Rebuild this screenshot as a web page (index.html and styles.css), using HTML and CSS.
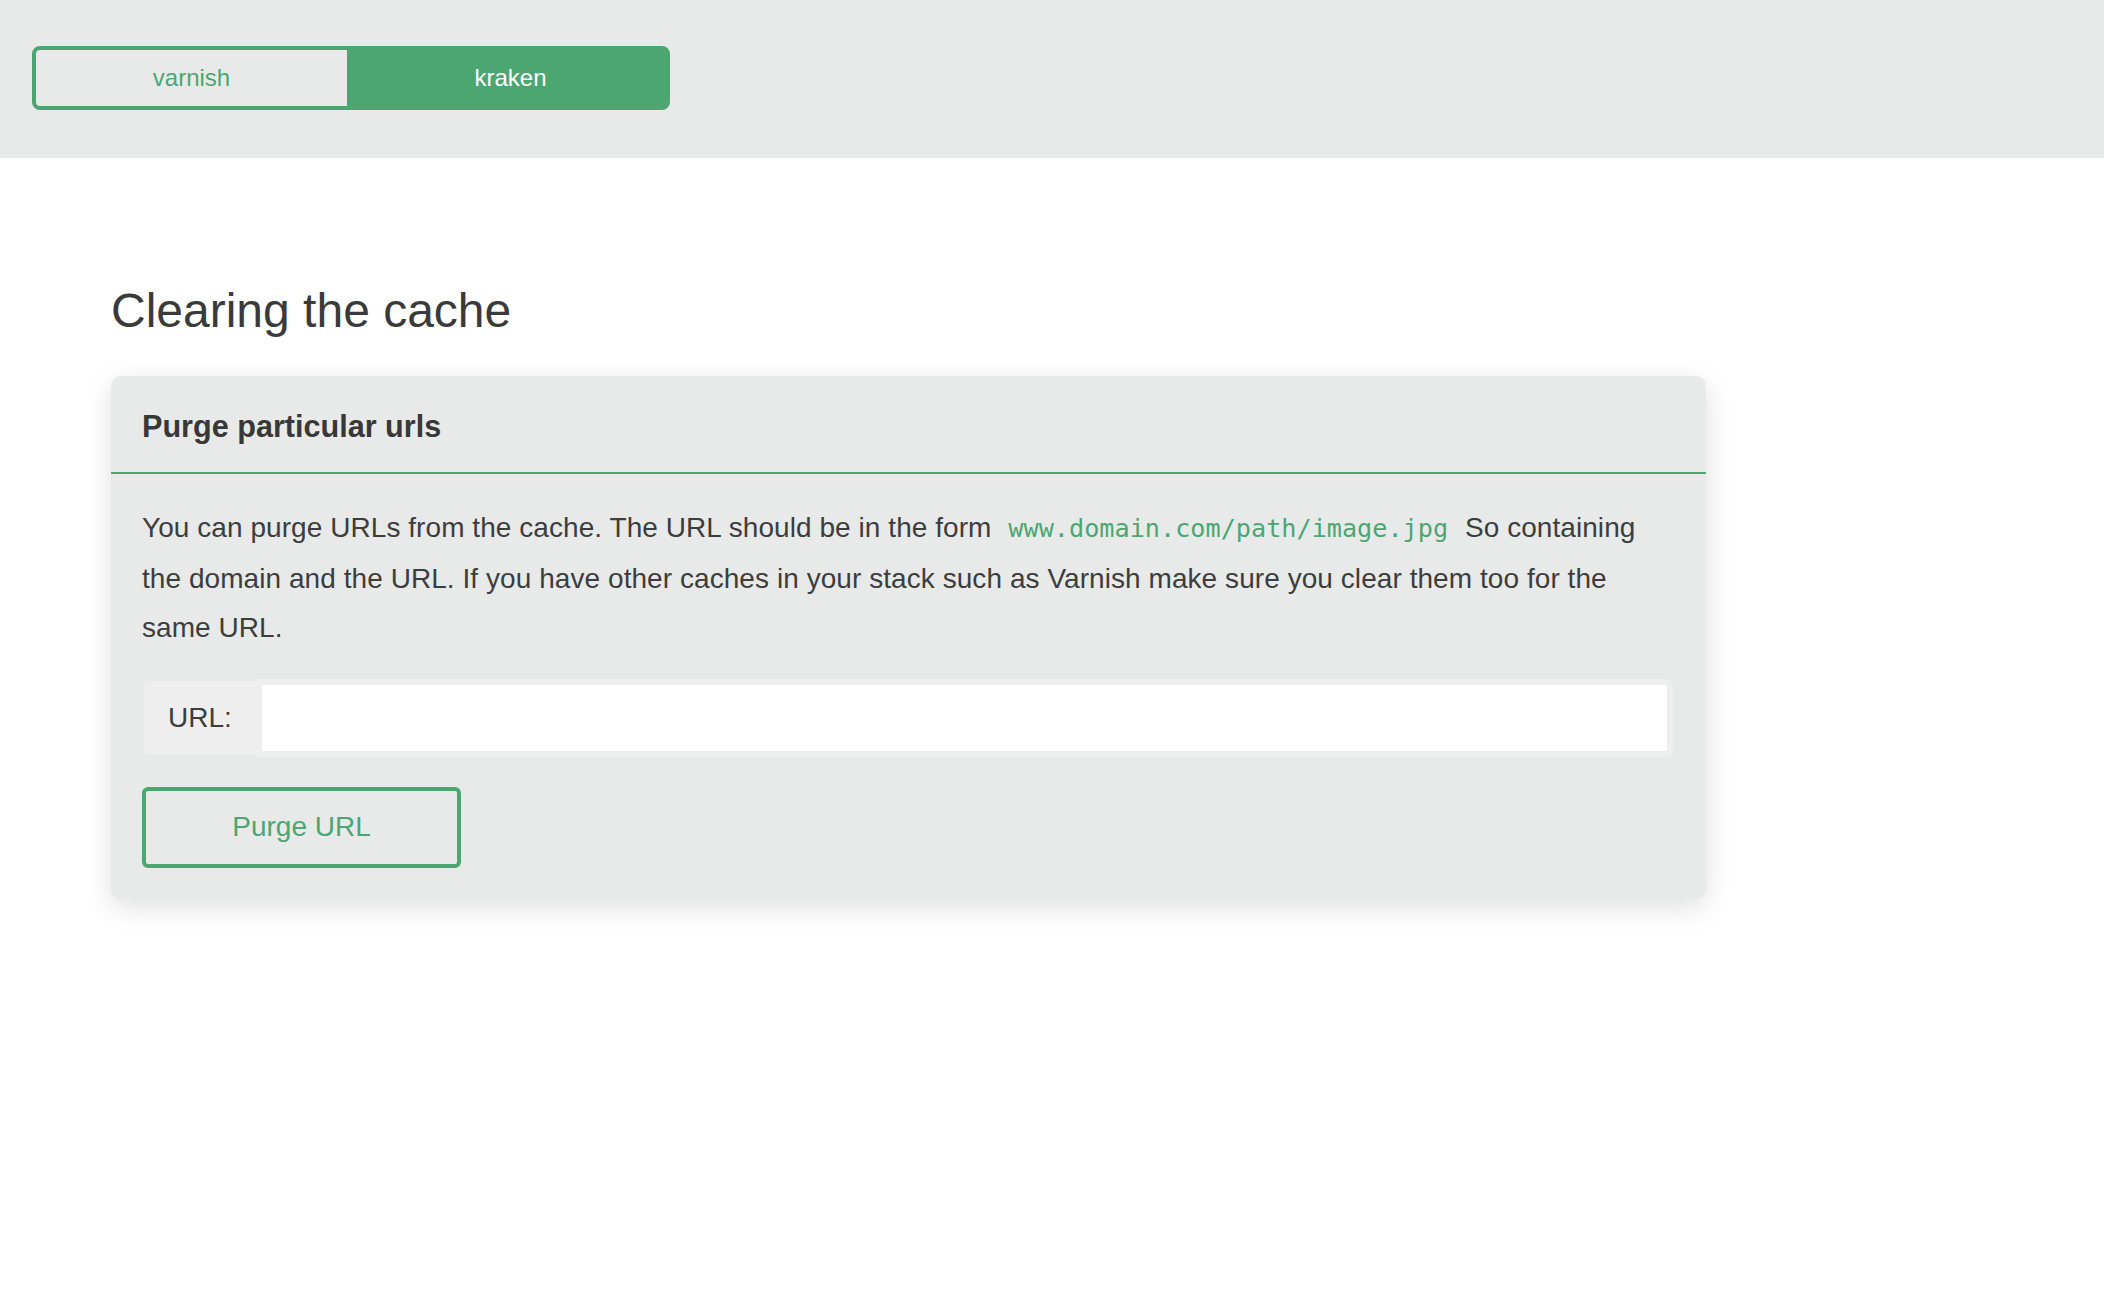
FILE: index.html
```html
<!DOCTYPE html>
<html lang="en">
<head>
<meta charset="utf-8">
<title>Clearing the cache</title>
<link rel="stylesheet" href="styles.css">
</head>
<body>
<header class="topbar">
  <nav class="toggle">
    <a class="toggle-btn toggle-left" href="#">varnish</a>
    <a class="toggle-btn toggle-right active" href="#">kraken</a>
  </nav>
</header>
<main class="main">
  <h1 class="page-title">Clearing the cache</h1>
  <section class="card">
    <div class="card-header">
      <h2 class="card-title">Purge particular urls</h2>
    </div>
    <div class="card-body">
      <p class="card-text">You can purge URLs from the cache. The URL should be in the form <code class="code">www.domain.com/path/image.jpg</code> So containing the domain and the URL. If you have other caches in your stack such as Varnish make sure you clear them too for the same URL.</p>
      <div class="input-group">
        <label class="input-label" for="url">URL:</label>
        <input class="input-field" id="url" type="text">
      </div>
      <button class="btn-outline" type="button">Purge URL</button>
    </div>
  </section>
</main>
</body>
</html>
```
FILE: styles.css
```css
* { box-sizing: border-box; }
html, body { margin: 0; padding: 0; background: #ffffff; }
body {
  font-family: "Liberation Sans", Arial, Helvetica, sans-serif;
  color: #3d3d3d;
}
.topbar {
  background: #e8eae9;
  height: 158px;
  padding: 46px 0 0 32px;
}
.toggle {
  display: flex;
  width: 638px;
  height: 64px;
}
.toggle-btn {
  flex: 1;
  display: flex;
  align-items: center;
  justify-content: center;
  border: 4px solid #4ca672;
  font-size: 24px;
  text-decoration: none;
  color: #4ca672;
}
.toggle-left {
  border-radius: 8px 0 0 8px;
  background: #e8eae9;
}
.toggle-right {
  border-radius: 0 8px 8px 0;
  background: #4ca672;
  color: #ffffff;
}
.main {
  padding: 0 0 80px 111px;
}
.page-title {
  margin: 125px 0 37px;
  font-size: 48px;
  line-height: 56px;
  font-weight: 400;
  color: #3a3a3a;
}
.card {
  width: 1595px;
  background: #e8eae9;
  border-radius: 10px;
  box-shadow: 0 8px 28px rgba(0, 0, 0, 0.13);
}
.card-header {
  padding: 30px 31px 26px;
  border-bottom: 2px solid #4ca672;
}
.card-title {
  margin: 0;
  font-size: 30.6px;
  line-height: 40px;
  font-weight: 700;
  color: #383838;
}
.card-body {
  padding: 29px 33px 31px 31px;
}
.card-text {
  margin: 0;
  font-size: 28px;
  line-height: 49.5px;
  letter-spacing: 0.06px;
}
.code {
  font-family: "DejaVu Sans Mono", "Liberation Mono", monospace;
  font-size: 25.2px;
  letter-spacing: 0;
  color: #4ca672;
  padding: 0 9px;
}
.input-group {
  display: flex;
  align-items: center;
  margin-top: 26px;
  height: 78px;
}
.input-label {
  height: 74px;
  margin-left: 2px;
  padding: 0 24px;
  display: flex;
  align-items: center;
  background: #eeeeee;
  border-radius: 6px 0 0 6px;
  font-size: 28px;
  color: #3d3d3d;
}
.input-field {
  flex: 1;
  height: 78px;
  border: 6px solid #eeeeee;
  border-radius: 0 6px 6px 0;
  background: #ffffff;
  font-family: inherit;
  font-size: 28px;
  outline: none;
  margin: 0;
}
.btn-outline {
  display: block;
  margin-top: 30px;
  width: 319px;
  height: 81px;
  border: 4px solid #4ca672;
  border-radius: 6px;
  background: transparent;
  color: #4ca672;
  font-family: inherit;
  font-size: 28px;
  cursor: pointer;
}
```
